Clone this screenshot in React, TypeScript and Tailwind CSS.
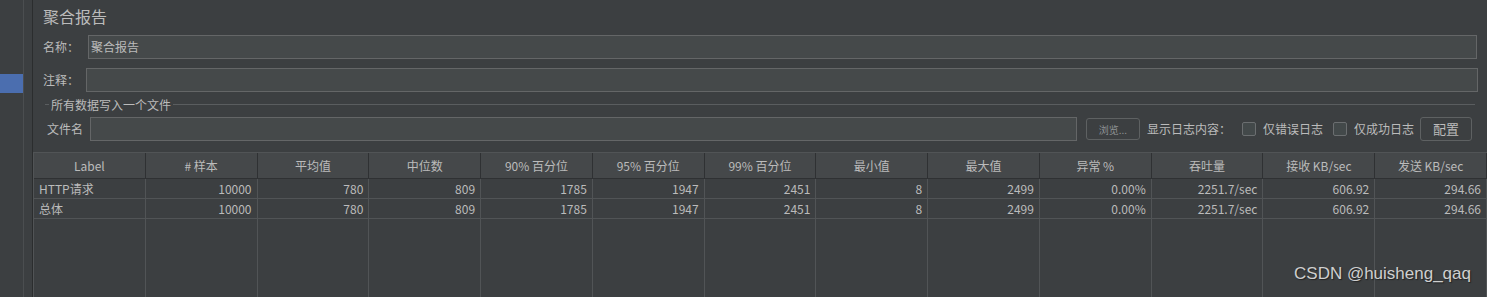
import React from 'react';

const headers = ['Label', '# 样本', '平均值', '中位数', '90% 百分位', '95% 百分位', '99% 百分位', '最小值', '最大值', '异常 %', '吞吐量', '接收 KB/sec', '发送 KB/sec'];

const rows = [
  ['HTTP请求', '10000', '780', '809', '1785', '1947', '2451', '8', '2499', '0.00%', '2251.7/sec', '606.92', '294.66'],
  ['总体', '10000', '780', '809', '1785', '1947', '2451', '8', '2499', '0.00%', '2251.7/sec', '606.92', '294.66'],
];

function Checkbox({ label }: { label: string }) {
  return (
    <div className="flex shrink-0 items-center gap-[7px] whitespace-nowrap">
      <span className="h-[14px] w-[14px] shrink-0 rounded-[2px] border border-[#6b6e70] bg-[#43494a]" />
      <span>{label}</span>
    </div>
  );
}

export default function App() {
  return (
    <div className="relative flex h-[297px] w-[1487px] overflow-hidden bg-[#3c3f41] text-[12px] text-[#bbbbbb] font-['Noto_Sans_CJK_SC','Noto_Sans',sans-serif]">
      {/* left tree strip */}
      <div className="flex w-[23px] flex-col">
        <div className="h-[74px]" />
        <div className="h-[19px] bg-[#4b6eaf]" />
      </div>
      <div className="w-px bg-[#4b4e50]" />
      <div className="w-[8px]" />
      <div className="w-px bg-[#2b2d2e]" />

      <div className="flex min-w-0 flex-1 flex-col">
        <div className="h-[32px] pl-[10px] text-[16px] leading-[32px] text-[#bbbbbb]">聚合报告</div>

        <div className="mt-[3px] flex h-[24px] items-center pl-[10px] pr-[10px]">
          <span className="w-[45px] shrink-0">名称：</span>
          <div className="flex h-full flex-1 items-center border border-[#646667] bg-[#45494a] pl-[2px]">聚合报告</div>
        </div>

        <div className="mt-[9px] flex h-[24px] items-center pl-[10px] pr-[9px]">
          <span className="w-[43px] shrink-0">注释：</span>
          <div className="h-full flex-1 border border-[#646667] bg-[#45494a]" />
        </div>

        <div className="flex h-[25px] items-center pl-[12px] pr-[12px]">
          <div className="h-px w-[4px] bg-[#5a5d5f]" />
          <span className="px-[2px]">所有数据写入一个文件</span>
          <div className="h-px flex-1 bg-[#5a5d5f]" />
        </div>

        <div className="flex h-[24px] items-center whitespace-nowrap pl-[14px] pr-[15px]">
          <span className="w-[43px] shrink-0">文件名</span>
          <div className="h-full min-w-0 flex-1 border border-[#646667] bg-[#45494a]" />
          <button className="ml-[9px] h-[22px] w-[54px] shrink-0 rounded-[3px] border border-[#5e6162] bg-[#3c3f41] text-[10px] text-[#8e9294]">浏览...</button>
          <span className="ml-[7px] shrink-0">显示日志内容：</span>
          <div className="ml-[11px] shrink-0"><Checkbox label="仅错误日志" /></div>
          <div className="ml-[10px] shrink-0"><Checkbox label="仅成功日志" /></div>
          <button className="ml-[6px] h-[24px] w-[52px] shrink-0 rounded-[3px] border border-[#5e6162] bg-[#3c3f41] text-[13px] text-[#bbbbbb]">配置</button>
        </div>

        <div className="mt-[11px] flex min-h-0 flex-1 flex-col border-l border-t border-[#515456]">
          <div className="grid h-[26px] grid-cols-[repeat(13,minmax(0,1fr))] border-b border-[#2f3133] bg-[#45484a]">
            {headers.map((h, i) => (
              <div key={i} className="flex items-center justify-center border-r border-[#2f3133]">{h}</div>
            ))}
          </div>
          {rows.map((r, ri) => (
            <div key={ri} className="grid h-[20px] grid-cols-[repeat(13,minmax(0,1fr))] border-b border-[#515456]">
              {r.map((c, ci) => (
                <div key={ci} className={`flex items-center border-r border-[#515456] ${ci === 0 ? 'justify-start pl-[5px]' : 'justify-end pr-[5px]'}`}>{c}</div>
              ))}
            </div>
          ))}
          <div className="grid flex-1 grid-cols-[repeat(13,minmax(0,1fr))]">
            {headers.map((_, i) => (
              <div key={i} className="border-r border-[#515456]" />
            ))}
          </div>
        </div>
      </div>

      <div className="absolute bottom-[11px] right-[16px] font-['Liberation_Sans',sans-serif] text-[17px] text-[#cfcfcf] [text-shadow:1px_1px_1px_#222]">CSDN @huisheng_qaq</div>
    </div>
  );
}
